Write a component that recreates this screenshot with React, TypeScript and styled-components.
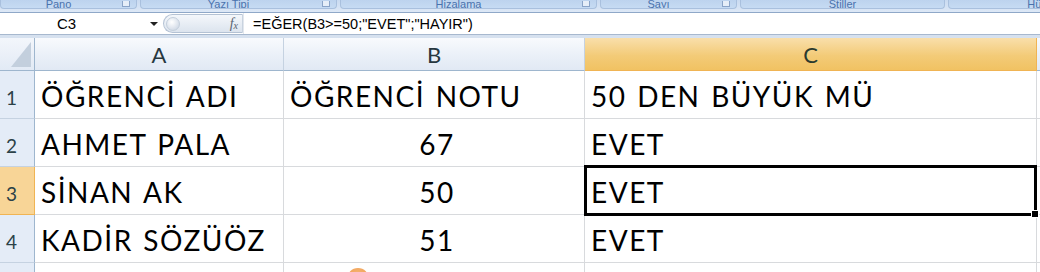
import * as React from 'react'
import styled, { createGlobalStyle } from 'styled-components'

const GlobalStyle = createGlobalStyle`
  html, body {
    margin: 0;
    padding: 0;
    background: #ffffff;
    overflow: hidden;
  }
`

interface Group {
  label: string
  width: number
  launcher?: boolean
}

const groups: Group[] = [
  { label: 'Pano', width: 137, launcher: true },
  { label: 'Yazı Tipi', width: 197, launcher: true },
  { label: 'Hizalama', width: 257, launcher: true },
  { label: 'Sayı', width: 137, launcher: true },
  { label: 'Stiller', width: 205 },
  { label: 'Hücreler', width: 200 }
]

const columns = ['A', 'B', 'C']
const colWidths = [249, 301, 452]

const rows = [
  ['ÖĞRENCİ ADI', 'ÖĞRENCİ NOTU', '50 DEN BÜYÜK MÜ'],
  ['AHMET PALA', '67', 'EVET'],
  ['SİNAN AK', '50', 'EVET'],
  ['KADİR SÖZÜÖZ', '51', 'EVET']
]

const selectedCol = 2
const selectedRow = 2

const App = () => {
  const gc = selectedCol + 2
  const gr = selectedRow + 2
  return (
    <Page>
      <GlobalStyle />
      <Ribbon>
        {groups.map((g, i) => (
          <GroupLabel key={i} style={{ width: g.width }}>
            <LabelText $launcher={!!g.launcher}>{g.label}</LabelText>
            {g.launcher && <Launcher />}
          </GroupLabel>
        ))}
      </Ribbon>
      <FormulaBar>
        <NameBox>
          <NameText>C3</NameText>
          <DropArrow />
        </NameBox>
        <FxBox>
          <Knob />
          <FxText>
            f<sub>x</sub>
          </FxText>
        </FxBox>
        <Formula>=EĞER(B3&gt;=50;"EVET";"HAYIR")</Formula>
      </FormulaBar>
      <Sheet>
        <Corner>
          <CornerTriangle />
        </Corner>
        {columns.map((c, i) => (
          <ColHeader key={c} $active={i === selectedCol}>
            {c}
          </ColHeader>
        ))}
        <ColHeader $active={false} />
        {rows.map((r, ri) => (
          <React.Fragment key={ri}>
            <RowHeader $active={ri === selectedRow}>{ri + 1}</RowHeader>
            {r.map((v, ci) => (
              <Cell key={ci} $center={ci === 1 && ri > 0}>
                {v}
              </Cell>
            ))}
            <Cell $center={false} />
          </React.Fragment>
        ))}
        <RowHeader $active={false} />
        <Cell $center={false} />
        <Cell $center={false}>
          <Bubble />
        </Cell>
        <Cell $center={false} />
        <Cell $center={false} />
        <Selection style={{ gridColumn: `${gc} / ${gc + 1}`, gridRow: `${gr} / ${gr + 1}` }}>
          <FillHandle />
        </Selection>
      </Sheet>
    </Page>
  )
}

export default App

const Page = styled.div`
  width: 1040px;
  height: 272px;
  overflow: hidden;
  background: #d6e1ef;
  font-family: 'Liberation Sans', Arial, sans-serif;
`

const Ribbon = styled.div`
  display: flex;
  gap: 3px;
  height: 13px;
  background: linear-gradient(#c9daf0, #dde8f6);
  border-bottom: 1px solid #8fa8c8;
  box-sizing: border-box;
`

const GroupLabel = styled.div`
  position: relative;
  height: 9px;
  flex-shrink: 0;
  display: flex;
  justify-content: center;
  align-items: flex-end;
  overflow: hidden;
  background: linear-gradient(#bdd3ee, #c6dbf3);
  border: 1px solid #a9c0de;
  border-top: none;
  border-radius: 0 0 4px 4px;
  box-sizing: border-box;
`

const LabelText = styled.span<{ $launcher: boolean }>`
  font-family: 'Liberation Sans', Arial, sans-serif;
  font-size: 11px;
  line-height: 11px;
  margin-bottom: -2px;
  margin-right: ${({ $launcher }) => ($launcher ? '20px' : '0')};
  color: #4a72ad;
  white-space: nowrap;
`

const Launcher = styled.div`
  position: absolute;
  right: 6px;
  bottom: 1px;
  width: 8px;
  height: 6px;
  border: 1px solid #8aa4c8;
  border-top: none;
  background: #e6eef8;
  box-sizing: border-box;
`

const FormulaBar = styled.div`
  display: flex;
  align-items: stretch;
  height: 22px;
  background: #ffffff;
  border-bottom: 1px solid #a7b8ce;
  box-sizing: border-box;
`

const NameBox = styled.div`
  position: relative;
  width: 163px;
  display: flex;
  align-items: center;
  justify-content: center;
  padding-right: 30px;
  box-sizing: border-box;
`

const NameText = styled.span`
  font-size: 15px;
  color: #000000;
`

const DropArrow = styled.div`
  position: absolute;
  right: 5px;
  top: 9px;
  width: 0;
  height: 0;
  border-left: 4px solid transparent;
  border-right: 4px solid transparent;
  border-top: 4px solid #222222;
`

const FxBox = styled.div`
  position: relative;
  width: 80px;
  margin: 1px 0;
  display: flex;
  align-items: center;
  justify-content: flex-end;
  padding-right: 4px;
  background: linear-gradient(#f4f7fb, #dce4ee);
  border: 1px solid #b4c2d4;
  border-right: 1px solid #c9d3df;
  border-radius: 10px 0 0 10px;
  box-sizing: border-box;
`

const Knob = styled.div`
  position: absolute;
  left: 2px;
  top: 2px;
  width: 14px;
  height: 14px;
  border-radius: 50%;
  background: radial-gradient(circle at 40% 35%, #ffffff, #d6dee9 70%, #b9c6d6);
  border: 1px solid #c4cfdc;
  box-sizing: border-box;
`

const FxText = styled.span`
  font-family: 'Liberation Serif', serif;
  font-style: italic;
  font-size: 14px;
  color: #5a6470;
  sub {
    font-size: 10px;
    vertical-align: -1px;
  }
`

const Formula = styled.div`
  flex: 1;
  display: flex;
  align-items: center;
  padding-left: 9px;
  font-size: 14.5px;
  color: #000000;
  border-left: 1px solid #e2e7ee;
`

const Sheet = styled.div`
  position: relative;
  margin-top: 3px;
  display: grid;
  grid-template-columns: 35px ${colWidths.map(w => w + 'px').join(' ')} 1fr;
  grid-template-rows: 33px repeat(4, 48px) 20px;
  background: #ffffff;
  font-family: Lato, 'Open Sans', sans-serif;
`

const Corner = styled.div`
  position: relative;
  background: linear-gradient(#f3f6fb, #e2eaf5);
  border-right: 1px solid #9eb6ce;
  border-bottom: 1px solid #9eb6ce;
  box-sizing: border-box;
`

const CornerTriangle = styled.div`
  position: absolute;
  right: 3px;
  bottom: 3px;
  width: 0;
  height: 0;
  border-left: 20px solid transparent;
  border-bottom: 25px solid #c3cfdd;
`

const ColHeader = styled.div<{ $active: boolean }>`
  display: flex;
  align-items: center;
  justify-content: center;
  font-size: 22px;
  color: ${({ $active }) => ($active ? '#2b3a2e' : '#27373f')};
  background: ${({ $active }) =>
    $active
      ? 'linear-gradient(#f9dfab, #f3cb78 55%, #f1c262)'
      : 'linear-gradient(#f8fafd, #eaf0f8 55%, #e1e9f4)'};
  border-right: 1px solid ${({ $active }) => ($active ? '#f0b453' : '#c5d2e1')};
  border-bottom: 1px solid ${({ $active }) => ($active ? '#f0b453' : '#9eb6ce')};
  box-sizing: border-box;
`

const RowHeader = styled.div<{ $active: boolean }>`
  display: flex;
  align-items: flex-end;
  padding: 0 0 9px 6px;
  font-size: 19px;
  color: #2b4148;
  background: ${({ $active }) => ($active ? '#f8d597' : '#e4ecf7')};
  border-right: 1px solid ${({ $active }) => ($active ? '#f0b453' : '#9eb6ce')};
  border-bottom: 1px solid ${({ $active }) => ($active ? '#f0b453' : '#c5d2e1')};
  box-sizing: border-box;
`

const Cell = styled.div<{ $center: boolean }>`
  position: relative;
  display: flex;
  align-items: flex-end;
  justify-content: ${({ $center }) => ($center ? 'center' : 'flex-start')};
  padding: 0 0 5px 6px;
  font-size: 28px;
  letter-spacing: 1.5px;
  word-spacing: 2px;
  color: #000000;
  white-space: nowrap;
  border-right: 1px solid #d8dadd;
  border-bottom: 1px solid #d8dadd;
  box-sizing: border-box;
`

const Selection = styled.div`
  position: absolute;
  top: -2px;
  bottom: -1px;
  left: -1px;
  right: 0;
  border: 3px solid #000000;
  pointer-events: none;
`

const FillHandle = styled.div`
  position: absolute;
  right: -5px;
  bottom: -5px;
  width: 6px;
  height: 6px;
  background: #000000;
  border: 1px solid #ffffff;
`

const Bubble = styled.div`
  position: absolute;
  left: 63px;
  top: 5px;
  width: 22px;
  height: 22px;
  border-radius: 50%;
  background: radial-gradient(circle at 50% 30%, #f6b574, #ec9240);
`
